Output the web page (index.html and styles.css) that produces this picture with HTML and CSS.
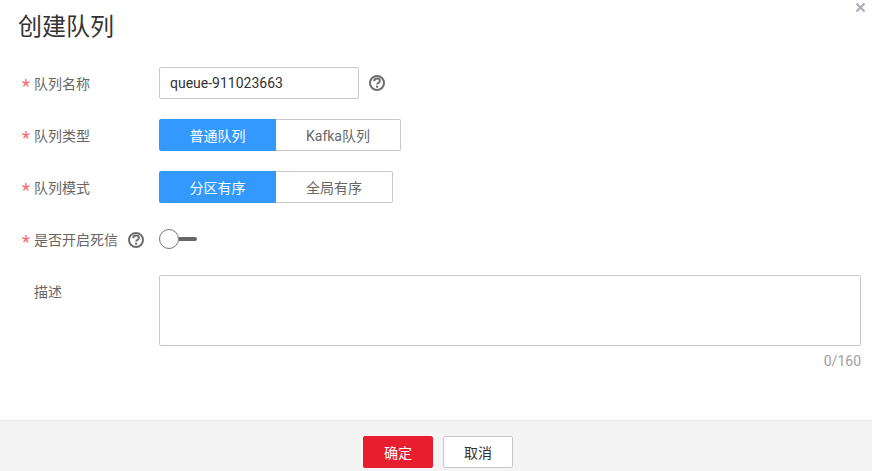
FILE: index.html
```html
<!DOCTYPE html>
<html lang="zh-CN">
<head>
<meta charset="utf-8">
<title>创建队列</title>
<link rel="stylesheet" href="styles.css">
</head>
<body>
<div class="dialog">
  <svg class="close" width="11" height="11" viewBox="0 0 11 11"><path d="M1.5 1.5l8 8M9.5 1.5l-8 8" stroke="#adb2b8" stroke-width="2.4" fill="none"/></svg>
  <h1 class="title">创建队列</h1>
  <form class="form">
    <div class="row">
      <div class="label"><span class="star">*</span>队列名称</div>
      <div class="value value-text">queue-911023663</div>
      <svg class="help help-after" width="18" height="18" viewBox="0 0 18 18"><circle cx="9" cy="9" r="7" fill="none" stroke="#6e6e6e" stroke-width="2"/><path d="M6.2 7.2c0-1.7 1.3-2.7 2.9-2.7 1.6 0 2.8 1 2.8 2.4 0 2-2.8 1.9-2.8 3.7" fill="none" stroke="#6e6e6e" stroke-width="1.9"/><rect x="8.1" y="11.7" width="2" height="2" fill="#6e6e6e"/></svg>
    </div>
    <div class="row">
      <div class="label"><span class="star">*</span>队列类型</div>
      <div class="seg">
        <div class="seg-item on">普通队列</div>
        <div class="seg-item wide">Kafka队列</div>
      </div>
    </div>
    <div class="row">
      <div class="label"><span class="star">*</span>队列模式</div>
      <div class="seg">
        <div class="seg-item on">分区有序</div>
        <div class="seg-item">全局有序</div>
      </div>
    </div>
    <div class="row">
      <div class="label"><span class="star">*</span>是否开启死信<svg class="help help-label" width="18" height="18" viewBox="0 0 18 18"><circle cx="9" cy="9" r="7" fill="none" stroke="#6e6e6e" stroke-width="2"/><path d="M6.2 7.2c0-1.7 1.3-2.7 2.9-2.7 1.6 0 2.8 1 2.8 2.4 0 2-2.8 1.9-2.8 3.7" fill="none" stroke="#6e6e6e" stroke-width="1.9"/><rect x="8.1" y="11.7" width="2" height="2" fill="#6e6e6e"/></svg></div>
      <div class="switch"><span class="knob"></span><span class="track"></span></div>
    </div>
    <div class="row row-top">
      <div class="label label-top"><span class="star blank">*</span>描述</div>
      <div class="area-wrap">
        <div class="area"></div>
        <div class="count">0/160</div>
      </div>
    </div>
  </form>
  <div class="footer">
    <button type="button" class="btn primary">确定</button>
    <button type="button" class="btn">取消</button>
  </div>
</div>
</body>
</html>
```
FILE: styles.css
```css
* { box-sizing: border-box; }
html, body { margin: 0; height: 100%; background: #fff; overflow: hidden; }
body { font-family: Roboto, "Noto Sans CJK SC", sans-serif; font-size: 14px; color: #666; }
.dialog { position: relative; height: 471px; display: flex; flex-direction: column; }
.close { position: absolute; top: 2px; right: 6px; }
.title { margin: 0; padding: 12px 0 0 18px; font-size: 24px; line-height: 31px; font-weight: 400; color: #333; height: 43px; }
.form { flex: 1; padding: 24px 11px 0 22px; display: flex; flex-direction: column; gap: 20px; }
.row { display: flex; align-items: center; height: 32px; }
.row-top { align-items: flex-start; height: auto; }
.label { width: 137px; flex: none; display: flex; align-items: center; color: #666; line-height: 20px; padding-top: 2px; }
.label-top { padding-top: 5px; }
.star { width: 12px; flex: none; color: #f66; font-size: 18px; line-height: 20px; margin-top: 3px; }
.blank { visibility: hidden; }
.value { width: 200px; height: 32px; border: 1px solid #c8c8c8; border-radius: 2px; }
.value-text { padding: 0 10px; line-height: 30px; color: #333; }
.help { flex: none; display: block; }
.help-after { margin-left: 9px; }
.help-label { margin-left: 9px; margin-top: -1px; }
.seg { display: flex; height: 32px; }
.seg-item { width: 117px; display: flex; align-items: center; justify-content: center; border: 1px solid #c8c8c8; border-left: 0; border-radius: 0 2px 2px 0; color: #666; }
.seg-item.wide { width: 125px; }
.seg-item.on { background: #3399ff; border: 0; border-radius: 2px 0 0 2px; color: #fff; }
.switch { display: flex; align-items: center; height: 20px; margin-top: -1px; }
.knob { width: 20px; height: 20px; border: 1px solid #777; border-radius: 50%; background: #fff; }
.track { width: 18px; height: 4px; background: #666; border-radius: 0 2px 2px 0; }
.area-wrap { flex: 1; }
.area { height: 71px; border: 1px solid #c8c8c8; border-radius: 2px; }
.count { margin-top: 5px; text-align: right; color: #a0a0a0; line-height: 20px; }
.footer { height: 51px; padding: 15px 0 0 4px; background: #f4f4f4; border-top: 1px solid #eaeaea; display: flex; justify-content: center; gap: 10px; }
.btn { width: 70px; height: 32px; padding: 0; border: 1px solid #c8c8c8; border-radius: 2px; background: #fff; color: #333; font: inherit; }
.btn.primary { background: #e61e2d; border-color: #e61e2d; color: #fff; }
```
